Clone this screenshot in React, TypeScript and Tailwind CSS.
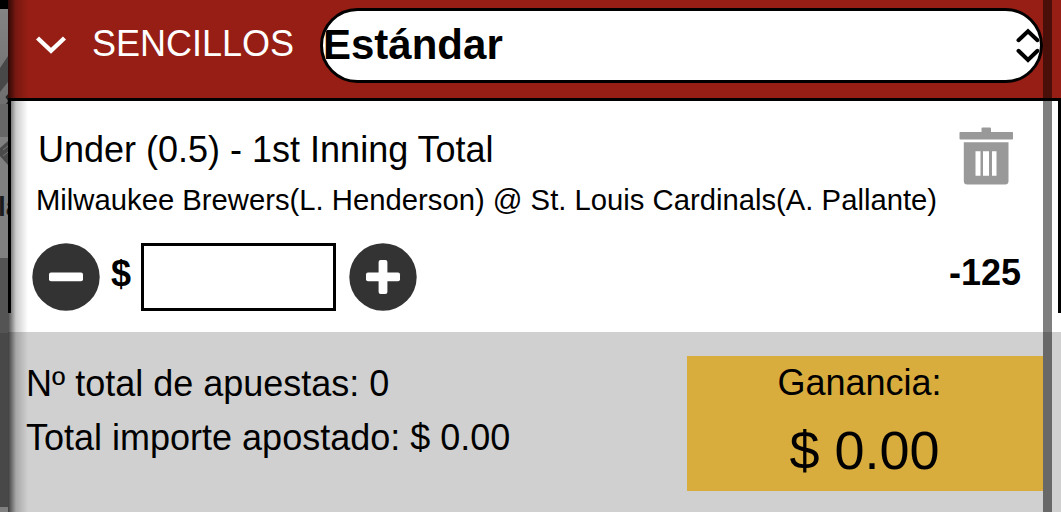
import React from 'react';

function Backdrop() {
  return (
    <div className="relative h-full w-2 shrink-0 overflow-hidden bg-[#808080]">
      <svg className="block" width="8" height="512" viewBox="0 0 8 512">
        <defs>
          <linearGradient id="wall" x1="0" y1="0" x2="0" y2="1">
            <stop offset="0" stopColor="#848484" />
            <stop offset="1" stopColor="#6b6b6b" />
          </linearGradient>
        </defs>
        <rect width="8" height="9" fill="#000" />
        <rect y="9" width="8" height="111" fill="url(#wall)" />
        <path d="M0 68 L8 56 V82 L0 92Z" fill="#484848" />
        <path d="M8 94 L5.500 97 L8 101 L6 104 H8Z" fill="#222" />
        <rect y="104" width="8" height="33" fill="#666" />
        <path d="M8 141 L0 148 V156 L8 165Z" fill="#4a4a4a" />
        <path d="M8 146 L3 150 M8 152 L3 156" stroke="#777" />
        <rect y="258" width="8" height="75" fill="#545454" />
        <rect y="333" width="8" height="174" fill="#484848" />
      </svg>
      <span className="absolute -left-[2px] top-[192px] text-[28px] leading-[30px] font-bold text-[#1c1c1c]">la</span>
    </div>
  );
}

function RoundButton({ plus }: { plus?: boolean }) {
  return (
    <button className="size-[68px] shrink-0" aria-label={plus ? 'Más' : 'Menos'}>
      <svg width="68" height="68" viewBox="0 0 68 68">
        <circle cx="34" cy="34" r="33.700" fill="#333" />
        <rect x="17" y="29.500" width="34" height="8.800" rx="2" fill="#fff" />
        {plus && <rect x="29.600" y="17" width="8.800" height="34" rx="2" fill="#fff" />}
      </svg>
    </button>
  );
}

function Header() {
  return (
    <header className="flex h-[101px] shrink-0 border-b-[3px] border-black bg-[#961e14] pl-[28px] pt-2">
      <svg className="mt-[28px] shrink-0" width="30" height="18" viewBox="0 0 30 18">
        <path d="M1.500 2 L15 14.800 L28.500 2" fill="none" stroke="#fff" strokeWidth="4.400" />
      </svg>
      <span className="ml-[26px] mt-[15px] w-[228px] shrink-0 text-[36px] leading-[42px] text-white">SENCILLOS</span>
      <div className="flex h-[75px] w-[723px] items-start justify-between overflow-hidden rounded-full border-[3px] border-black bg-white">
        <span className="mt-[10px] text-[42px] leading-[48px] font-bold text-black">Estándar</span>
        <svg className="-mr-px mt-[17px] shrink-0" width="26" height="36" viewBox="0 0 26 36">
          <path
            d="M3.500 12.200 L13 3.300 L22.500 12.200 M3.500 22.800 L13 32 L22.500 22.800"
            fill="none"
            stroke="#000"
            strokeWidth="4"
            strokeLinecap="round"
          />
        </svg>
      </div>
    </header>
  );
}

function TrashIcon() {
  return (
    <svg className="mt-[26px] shrink-0" width="54" height="58" viewBox="0 0 54 58" fill="#999">
      <rect x="22.500" y="0.500" width="9.500" height="7" rx="1" />
      <rect x="0.500" y="5" width="53.500" height="7.500" rx="0.800" />
      <path d="M4.800 15.200 H49.500 V54 Q49.500 57.500 46 57.500 H8.300 Q4.800 57.500 4.800 54Z" />
      <path d="M16.500 24.300h5v24.500h-5z M24 24.300h6v24.500h-6z M33 24.300h4.500v24.500H33z" fill="#fff" />
    </svg>
  );
}

function Bet() {
  return (
    <main className="flex h-[231px] shrink-0 flex-col bg-white">
      <div className="flex">
        <div className="w-[951px] shrink-0 pl-[28px] pt-[28px]">
          <h1 className="ml-[2px] whitespace-nowrap text-[36px] leading-[42px]">Under (0.5) - 1st Inning Total</h1>
          <p className="mt-[12px] whitespace-nowrap text-[29.260px] leading-[34px]">
            Milwaukee Brewers(L. Henderson) @ St. Louis Cardinals(A. Pallante)
          </p>
        </div>
        <TrashIcon />
      </div>
      <div className="mt-[26px] flex h-[68px] pl-[24px]">
        <RoundButton />
        <span className="ml-[11px] mt-[10px] text-[36px] leading-[42px] font-bold">$</span>
        <input className="ml-[10px] h-[68px] w-[195px] border-[3px] border-black bg-white" aria-label="Importe" />
        <div className="ml-[13px]">
          <RoundButton plus />
        </div>
        <span className="ml-auto mr-[40px] mt-[9px] text-[36px] leading-[42px] font-bold">-125</span>
      </div>
    </main>
  );
}

function Summary() {
  return (
    <footer className="flex flex-1 justify-between bg-[#d0d0d0] pr-[18px]">
      <div className="whitespace-nowrap pl-[18px] pt-[25px] text-[36px] leading-[54px]">
        <p>Nº total de apuestas: 0</p>
        <p>Total importe apostado: $ 0.00</p>
      </div>
      <div className="mt-6 h-[135px] w-[356px] bg-[#d9ac3e] pr-[11px] pt-[6px] text-center">
        <p className="text-[36px] leading-[42px]">Ganancia:</p>
        <p className="mt-[15px] pl-[10px] text-[54px] leading-[62px]">$ 0.00</p>
      </div>
    </footer>
  );
}

export default function App() {
  return (
    <div className="relative flex h-[512px] w-[1061px] overflow-hidden bg-white font-['Liberation_Sans',Arial,sans-serif] text-black">
      <Backdrop />
      <div className="flex w-[1053px] flex-col">
        <Header />
        <Bet />
        <Summary />
      </div>
      <div className="absolute left-2 top-0 h-full w-[20px] bg-linear-to-r from-black/70 via-black/20 via-40% to-transparent" />
      <div className="absolute left-2 top-[98px] h-[215px] w-[3px] bg-black" />
      <div className="absolute right-0 top-[98px] h-[215px] w-[3px] bg-black" />
      <div className="absolute left-[1043px] top-0 h-full w-[9px] bg-black/50" />
    </div>
  );
}
